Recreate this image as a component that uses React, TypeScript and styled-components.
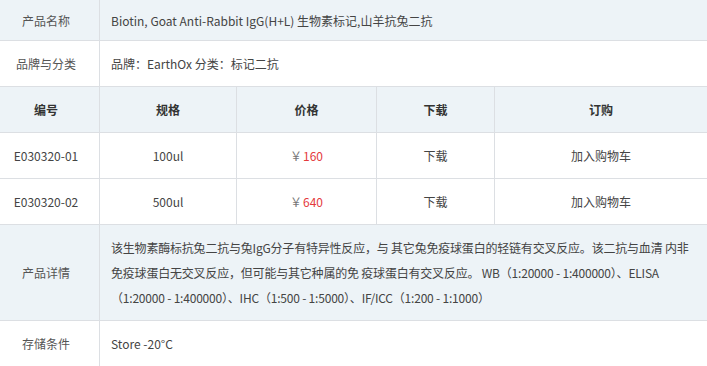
import styled, { createGlobalStyle } from 'styled-components';

const GlobalStyle = createGlobalStyle`
  body {
    margin: 0;
    background: #fff;
    font-family: "Noto Sans CJK SC", "Noto Sans", sans-serif;
    font-size: 12px;
    color: #333;
  }
`;

const specs = [
  { code: 'E030320-01', size: '100ul', price: '160' },
  { code: 'E030320-02', size: '500ul', price: '640' },
];

const Grid = styled.div`
  display: grid;
  grid-template-columns: 100px 137px 140px 118px 1fr;
  width: 707px;
`;

const Cell = styled.div<{ $shaded?: boolean; $span?: boolean; $left?: boolean; $bold?: boolean; $last?: boolean; $first?: boolean; $h?: number }>`
  display: flex;
  align-items: center;
  justify-content: ${(p) => (p.$left ? 'flex-start' : 'center')};
  grid-column: ${(p) => (p.$span ? '2 / 6' : 'auto')};
  height: ${(p) => p.$h ?? 45}px;
  padding: ${(p) => (p.$left ? '0 11px' : p.$first ? '0 7px 0 0' : '0')};
  background: ${(p) => (p.$shaded ? '#edf3f7' : '#fff')};
  border-bottom: 1px solid #dcdfe3;
  border-right: ${(p) => (p.$last || p.$span ? 'none' : '1px solid #dcdfe3')};
  font-weight: ${(p) => (p.$bold ? 700 : 400)};
  color: ${(p) => (p.$bold ? '#333' : '#444')};
`;

const Label = styled(Cell).attrs({ $first: true })`
  color: #555;
`;

const Details = styled.div`
  grid-column: 2 / 6;
  background: #edf3f7;
  border-bottom: 1px solid #dcdfe3;
  padding: 10px 8px 10px 11px;
  line-height: 25px;
  letter-spacing: -0.2px;
  color: #444;
`;

const Yen = styled.span`
  color: #777;
  margin-right: 1px;
`;

const Price = styled.span`
  color: #e4393c;
`;

export default function App() {
  return (
    <>
      <GlobalStyle />
      <Grid>
        <Label $shaded $h={40}>产品名称</Label>
        <Cell $shaded $span $left $h={40}>
          Biotin, Goat Anti-Rabbit IgG(H+L) 生物素标记,山羊抗兔二抗
        </Cell>

        <Label>品牌与分类</Label>
        <Cell $span $left>品牌：EarthOx 分类：标记二抗</Cell>

        <Cell $shaded $bold $first>编号</Cell>
        <Cell $shaded $bold>规格</Cell>
        <Cell $shaded $bold>价格</Cell>
        <Cell $shaded $bold>下载</Cell>
        <Cell $shaded $bold $last>订购</Cell>

        {specs.map((s) => (
          <>
            <Cell key={s.code + 'c'} $first>{s.code}</Cell>
            <Cell key={s.code + 's'}>{s.size}</Cell>
            <Cell key={s.code + 'p'}>
              <Yen>￥</Yen>
              <Price>{s.price}</Price>
            </Cell>
            <Cell key={s.code + 'd'}>下载</Cell>
            <Cell key={s.code + 'o'} $last>加入购物车</Cell>
          </>
        ))}

        <Label $shaded $h={95}>产品详情</Label>
        <Details>
          该生物素酶标抗兔二抗与兔IgG分子有特异性反应，与 其它兔免疫球蛋白的轻链有交叉反应。该二抗与血清 内非免疫球蛋白无交叉反应，但可能与其它种属的免 疫球蛋白有交叉反应。 WB（1:20000 - 1:400000）、ELISA（1:20000 - 1:400000）、IHC（1:500 - 1:5000）、IF/ICC（1:200 - 1:1000）
        </Details>

        <Label>存储条件</Label>
        <Cell $span $left>Store -20°C</Cell>
      </Grid>
    </>
  );
}
